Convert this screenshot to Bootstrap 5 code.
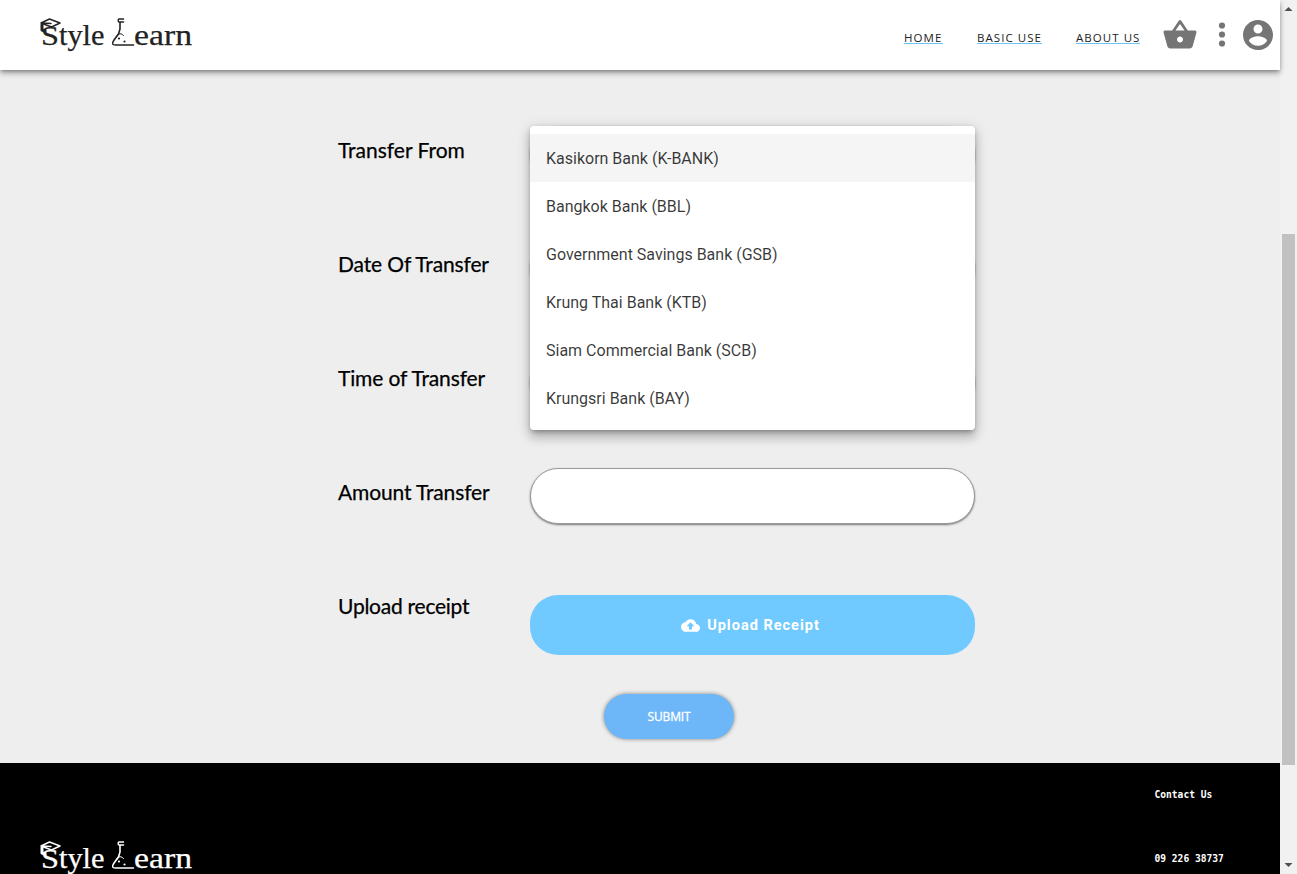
<!DOCTYPE html>
<html lang="en">
<head>
<meta charset="utf-8">
<meta name="viewport" content="width=device-width, initial-scale=1">
<title>Style Learn</title>
<link href="https://cdn.jsdelivr.net/npm/bootstrap@5.3.0/dist/css/bootstrap.min.css" rel="stylesheet">
<style>
html,body{height:100%;overflow:hidden}
body{background:#eee;font-family:Roboto,sans-serif;color:#000}
.page{width:1280px;min-width:0}
.topbar{height:70px;padding:0 7px 0 38px;background:#fff;box-shadow:0 2px 4px -1px rgba(0,0,0,.35),0 4px 5px rgba(0,0,0,.16),0 1px 8px rgba(0,0,0,.12);position:relative;z-index:3}
.menu-link{font:11.500px/15px "Open Sans",sans-serif;letter-spacing:1.05px;color:#222;text-decoration:none;height:14px;border-bottom:1px solid #6cc4f2;white-space:nowrap;margin-top:4px}
.logo{display:block;width:160px;height:50px;overflow:visible}
.form-area{height:693px;padding:56px 0 0 338px}
.field-row{height:114px;width:637px}
.field-label{width:192px;font:21px/30px Lato,sans-serif;letter-spacing:-.13px;-webkit-text-stroke:.25px #000;padding-top:9px;white-space:nowrap}
.pill{width:445px;height:56px;border:1px solid #999;border-radius:28px;background:#fff;box-shadow:0 1px 2px rgba(0,0,0,.5)}
.pill:focus{box-shadow:0 1px 2px rgba(0,0,0,.5)}
.options{position:absolute;left:0;top:0;width:445px;height:304px;padding:8px 0;background:#fff;border-radius:4px;z-index:2;box-shadow:0 5px 5px -3px rgba(0,0,0,.2),0 8px 10px 1px rgba(0,0,0,.14),0 3px 14px 2px rgba(0,0,0,.12),0 1px 4px rgba(0,0,0,.15)}
.options li{height:48px;padding:0 16px;font-size:16px;line-height:49px;color:rgba(0,0,0,.78)}
.options li.current{background:#f5f5f5}
.upload{width:445px;height:60px;margin-top:13px;padding:0 4px 0 0;border:0;border-radius:28px;background:#70caff;color:#fff;font-size:14.500px;font-weight:700;letter-spacing:1px}
.upload span{padding-top:1px}
.submit{width:130px;height:45px;margin:-2px 0 0 266px;padding:0;border:0;border-radius:23px;background:#6db7f8;color:#fff;font:12px "Open Sans",sans-serif;letter-spacing:-.15px;-webkit-text-stroke:.3px #fff;box-shadow:0 0 4px rgba(0,0,0,.45)}
.foot{height:111px;background:#000;color:#fff;padding:0 0 0 38px;overflow:hidden}
.contact{width:125.500px;font:bold 9.6px/16px "DejaVu Sans Mono",monospace;padding-top:24px}
.contact p{margin:0 0 48px;white-space:nowrap}
.scroll-track{width:17px;background:#f1f1f1}
.thumb{width:13px;height:531px;background:#c1c1c1}
</style>
</head>
<body class="d-flex">
<svg class="d-none" aria-hidden="true">
  <symbol id="logo" viewBox="0 0 160 50">
    <g fill="none" stroke="currentColor" stroke-linecap="round" stroke-linejoin="round">
      <path stroke-width="1.400" d="M3 13 11.500 9 22 13 13.500 17Z M3 13l10 .5"/>
      <path stroke-width="3" d="M4 14.500v5.500l3 1"/>
      <path stroke-width="1.600" d="M85.500 9h-4.500c-1 0-1 3 0 3h4.500M82 12v7l-1.500 5-4.500 6c-2.500 4-1.500 5 1.500 5h18"/>
      <path stroke-width="1" d="M78.500 26c2-3 5-3 7-.5"/>
    </g>
    <circle cx="81" cy="28.500" r="1.100" fill="currentColor"/><circle cx="86.500" cy="31.500" r="1.100" fill="currentColor"/>
    <g fill="currentColor" stroke="currentColor" stroke-width=".25" font-family="Liberation Serif,serif">
      <text x="3" y="35" font-size="28" textLength="18" lengthAdjust="spacingAndGlyphs">S</text>
      <text x="21" y="35" font-size="30" textLength="45.500" lengthAdjust="spacingAndGlyphs">tyle</text>
      <text x="96" y="35" font-size="30" textLength="58" lengthAdjust="spacingAndGlyphs">earn</text>
    </g>
  </symbol>
</svg>
<div class="page">
  <header class="topbar d-flex align-items-center">
    <svg class="logo" style="color:#222" role="img" aria-label="Style Learn"><use href="#logo"/></svg>
    <nav class="ms-auto d-flex align-items-center">
      <a class="menu-link" style="width:39px;margin-right:34px" href="#">HOME</a>
      <a class="menu-link" style="width:65px;margin-right:34px" href="#">BASIC USE</a>
      <a class="menu-link" style="width:64px;margin-right:22px" href="#">ABOUT US</a>
      <svg width="36" height="36" viewBox="0 0 24 24" fill="#757575"><path d="M17.210 9l-4.380-6.560c-.190-.280-.510-.420-.830-.420-.320 0-.640.140-.830.430L6.790 9H2c-.550 0-1 .450-1 1 0 .090.010.180.040.270l2.540 9.270c.230.840 1 1.460 1.920 1.460h13c.920 0 1.690-.620 1.930-1.460l2.540-9.270L23 10c0-.550-.450-1-1-1h-4.790zM9 9l3-4.400L15 9H9zm3 8c-1.100 0-2-.900-2-2s.900-2 2-2 2 .900 2 2-.900 2-2 2z"/></svg>
      <svg style="margin-left:18px;margin-right:12px" width="12" height="36" viewBox="0 0 12 36" fill="#757575"><circle cx="6" cy="8.500" r="3.100"/><circle cx="6" cy="17.500" r="3.100"/><circle cx="6" cy="26.500" r="3.100"/></svg>
      <svg style="margin-right:-3px" width="36" height="36" viewBox="0 0 24 24" fill="#757575"><path d="M12 2C6.480 2 2 6.480 2 12s4.480 10 10 10 10-4.480 10-10S17.520 2 12 2zm0 3c1.660 0 3 1.340 3 3s-1.340 3-3 3-3-1.340-3-3 1.340-3 3-3zm0 14.200c-2.500 0-4.710-1.280-6-3.220.030-1.990 4-3.080 6-3.080 1.990 0 5.970 1.090 6 3.080-1.290 1.940-3.500 3.220-6 3.220z"/></svg>
    </nav>
  </header>
  <main class="form-area">
    <div class="field-row d-flex">
      <label class="field-label" style="letter-spacing:0">Transfer From</label>
      <div class="position-relative">
        <div class="pill"></div>
        <ul class="options list-unstyled mb-0">
          <li class="current">Kasikorn Bank (K-BANK)</li>
          <li>Bangkok Bank (BBL)</li>
          <li>Government Savings Bank (GSB)</li>
          <li>Krung Thai Bank (KTB)</li>
          <li>Siam Commercial Bank (SCB)</li>
          <li>Krungsri Bank (BAY)</li>
        </ul>
      </div>
    </div>
    <div class="field-row d-flex"><label class="field-label">Date Of Transfer</label><div class="pill"></div></div>
    <div class="field-row d-flex"><label class="field-label">Time of Transfer</label><div class="pill"></div></div>
    <div class="field-row d-flex"><label class="field-label" for="amount">Amount Transfer</label><input id="amount" class="pill form-control"></div>
    <div class="field-row d-flex">
      <label class="field-label" style="letter-spacing:-.25px">Upload receipt</label>
      <button class="upload d-flex align-items-center justify-content-center" type="button">
        <svg width="19" height="19" style="margin-right:7px" viewBox="0 0 24 24" fill="#fff"><path d="M19.350 10.040C18.670 6.590 15.640 4 12 4 9.110 4 6.600 5.640 5.350 8.040 2.340 8.360 0 10.910 0 14c0 3.310 2.690 6 6 6h13c2.760 0 5-2.240 5-5 0-2.640-2.050-4.780-4.650-4.960zM14 13v4h-4v-4H7l5-5 5 5h-3z"/></svg><span>Upload Receipt</span>
      </button>
    </div>
    <button class="submit d-block" type="submit">SUBMIT</button>
  </main>
  <footer class="foot d-flex justify-content-between">
    <svg class="logo" style="margin-top:70px" role="img" aria-label="Style Learn"><use href="#logo"/></svg>
    <div class="contact"><p>Contact Us</p><p>09 226 38737</p></div>
  </footer>
</div>
<div class="scroll-track d-flex flex-column align-items-center justify-content-between">
  <svg width="17" height="17"><path d="M4.500 11h8l-4-4z" fill="#505050"/></svg>
  <div class="thumb" style="margin-top:125px"></div>
  <svg width="17" height="17"><path d="M4.500 6h8l-4 4z" fill="#505050"/></svg>
</div>
<script src="https://cdn.jsdelivr.net/npm/bootstrap@5.3.0/dist/js/bootstrap.bundle.min.js"></script>
</body>
</html>
